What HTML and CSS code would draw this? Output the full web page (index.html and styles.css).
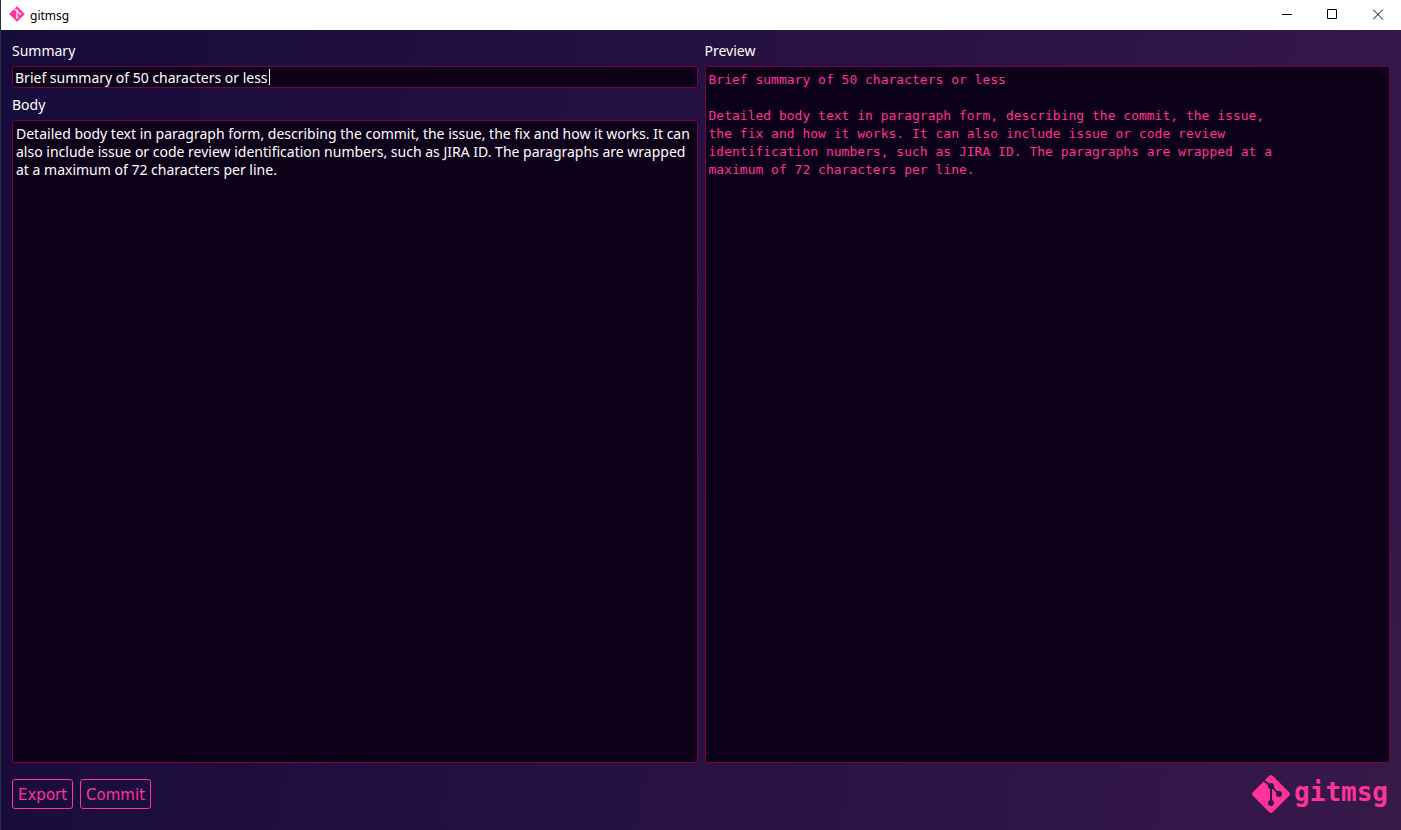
FILE: index.html
```html
<!DOCTYPE html>
<html lang="en">
<head>
<meta charset="utf-8">
<title>gitmsg</title>
<link rel="stylesheet" href="styles.css">
</head>
<body>
<div class="window">
  <header class="titlebar">
    <svg class="app-icon" viewBox="0 0 40 40" aria-hidden="true">
      <rect class="mark" x="6" y="6" width="28" height="28" rx="2" transform="rotate(45 20 20)"/>
      <path class="branch" d="M13 7 20 12V29M20 12 28 20"/>
      <circle class="node" cx="20" cy="12" r="3"/><circle class="node" cx="20" cy="29" r="3"/><circle class="node" cx="28" cy="20" r="3"/>
    </svg>
    <span class="app-name">gitmsg</span>
    <div class="controls">
      <button class="control" aria-label="Minimize"><svg class="glyph" viewBox="0 0 11 11"><path d="M1 5.5H11"/></svg></button>
      <button class="control" aria-label="Maximize"><svg class="glyph" viewBox="0 0 11 11"><path d="M.5.5H9.500V9.500H.5Z"/></svg></button>
      <button class="control" aria-label="Close"><svg class="glyph" viewBox="0 0 11 11"><path d="M0 .5 10 10.500M10 .5 0 10.500"/></svg></button>
    </div>
  </header>
  <main class="content">
    <div class="panes">
      <section class="pane">
        <label class="label" for="summary">Summary</label>
        <div class="summary-field">
          <input class="field summary" id="summary" type="text" value="Brief summary of 50 characters or less">
          <span class="caret"></span>
        </div>
        <label class="label" for="body">Body</label>
        <textarea class="field editor" id="body" spellcheck="false">Detailed body text in paragraph form, describing the commit, the issue, the fix and how it works. It can also include issue or code review identification numbers, such as JIRA ID. The paragraphs are wrapped at a maximum of 72 characters per line.</textarea>
      </section>
      <section class="pane">
        <label class="label" for="preview">Preview</label>
        <textarea class="field editor preview" id="preview" readonly spellcheck="false">Brief summary of 50 characters or less

Detailed body text in paragraph form, describing the commit, the issue,
the fix and how it works. It can also include issue or code review
identification numbers, such as JIRA ID. The paragraphs are wrapped at a
maximum of 72 characters per line.</textarea>
      </section>
    </div>
    <footer class="footer">
      <button class="action">Export</button>
      <button class="action">Commit</button>
      <div class="brand">
        <svg class="brand-icon" viewBox="0 0 40 40" aria-hidden="true">
          <rect class="mark" x="6" y="6" width="28" height="28" rx="2" transform="rotate(45 20 20)"/>
          <path class="branch" d="M12 6 20 12V29M20 12 28 20"/>
          <circle class="node" cx="20" cy="12" r="3"/><circle class="node" cx="20" cy="29" r="3"/><circle class="node" cx="28" cy="20" r="3"/>
        </svg>
        <span class="brand-name">gitmsg</span>
      </div>
    </footer>
  </main>
</div>
</body>
</html>
```
FILE: styles.css
```css
* { box-sizing: border-box; }
body { margin: 0; font-family: "Noto Sans", sans-serif; color: #fff; }
button { font: inherit; }
.window { display: flex; flex-direction: column; min-height: 100vh; border-left: 1px solid #20353f; }
.titlebar { display: flex; align-items: center; height: 30px; padding-left: 8px; background: #fff; color: #000; }
.app-icon { width: 16px; height: 16px; margin-bottom: 2px; }
.app-name { margin-left: 5px; font-size: 12px; }
.controls { display: flex; align-self: stretch; margin-left: auto; }
.control { display: grid; place-items: center; width: 46px; padding: 0 0 2px; border: 0; background: none; }
.glyph { width: 11px; height: 11px; fill: none; stroke: #000; }
.mark { fill: #ff3399; }
.branch { fill: none; stroke: #321847; stroke-width: 2; }
.node { fill: #321847; }
.app-icon .branch { stroke: #ffe0f0; stroke-width: 3; }
.app-icon .node { fill: #ffe0f0; }
.content { display: flex; flex: 1; flex-direction: column; padding: 10px 11px 21px; background: linear-gradient(100deg, #160b3b, #37194a); }
.panes { display: grid; flex: 1; grid-template-columns: 1fr 1fr; gap: 7px; }
.pane { display: flex; flex-direction: column; min-width: 0; }
.label { height: 22px; margin-bottom: 4px; font-size: 14px; line-height: 22px; }
.summary-field { position: relative; display: flex; margin: 0 0 6px; }
.field { width: 100%; margin: 0; border: 1px solid #7a0040; border-radius: 3px; background: #0d0019; color: #fff; font-family: inherit; font-size: 14px; outline: 0; }
.summary { height: 22px; padding: 0 2px; }
.caret { position: absolute; top: 3px; left: 257px; width: 1px; height: 16px; background: #fff; }
.editor { flex: 1; padding: 4px 3px; line-height: 18px; resize: none; }
.preview { color: #ff3399; font-family: "DejaVu Sans Mono", monospace; font-size: 13px; }
.footer { display: flex; align-items: center; gap: 7px; height: 30px; margin-top: 16px; }
.action { height: 30px; padding: 2px 5px 0; border: 1px solid #ff3399; border-radius: 3px; background: transparent; color: #ff3399; font-family: "DejaVu Sans", sans-serif; font-size: 15px; }
.brand { display: flex; align-items: center; margin-left: auto; padding-right: 2px; color: #ff3399; }
.brand-icon { width: 40px; height: 40px; }
.brand-name { margin-left: 3px; padding-bottom: 4px; font: 700 26px/30px "DejaVu Sans Mono", monospace; }
```
